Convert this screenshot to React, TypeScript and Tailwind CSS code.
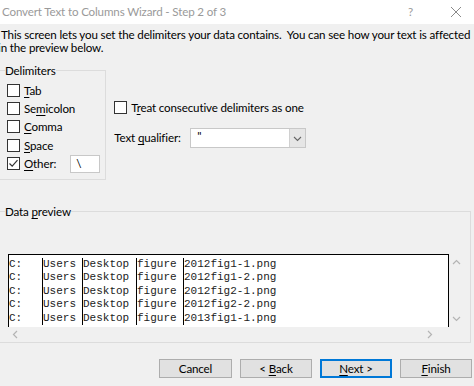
import React from 'react';

const rows = [
  ['C:', 'Users', 'Desktop', 'figure', '2012fig1-1.png'],
  ['C:', 'Users', 'Desktop', 'figure', '2012fig1-2.png'],
  ['C:', 'Users', 'Desktop', 'figure', '2012fig2-1.png'],
  ['C:', 'Users', 'Desktop', 'figure', '2012fig2-2.png'],
  ['C:', 'Users', 'Desktop', 'figure', '2013fig1-1.png'],
];

const colWidths = ['w-[33px]', 'w-[40px]', 'w-[54px]', 'w-[47px]', 'flex-1'];

const Check: React.FC<{ checked?: boolean }> = ({ checked }) => (
  <span className="w-[13px] h-[13px] border border-[#333333] bg-white flex items-center justify-center shrink-0">
    {checked && (
      <svg width="11" height="11" viewBox="0 0 11 11">
        <polyline points="1.5,5.5 4.2,8.2 9.5,2.2" fill="none" stroke="#333" strokeWidth="1.2" />
      </svg>
    )}
  </span>
);

const Chevron: React.FC<{ dir: 'up' | 'down' | 'left' | 'right' }> = ({ dir }) => {
  const pts = {
    up: '1,6 4.5,2.5 8,6',
    down: '1,3 4.5,6.5 8,3',
    left: '6,1 2.5,4.5 6,8',
    right: '3,1 6.5,4.5 3,8',
  }[dir];
  return (
    <svg width="9" height="9" viewBox="0 0 9 9">
      <polyline points={pts} fill="none" stroke="#b4b4b4" strokeWidth="1.2" />
    </svg>
  );
};

const Option: React.FC<{ pre?: string; u: string; post: string; checked?: boolean }> = ({ pre, u, post, checked }) => (
  <div className="flex items-center h-[18.4px] gap-[4px]">
    <Check checked={checked} />
    <span>
      {pre}
      <span className="underline underline-offset-2">{u}</span>
      {post}
    </span>
  </div>
);

export default function App() {
  return (
    <div
      className="w-[474px] h-[386px] overflow-hidden bg-[#f0f0f0] text-[11.6px] tracking-[-0.15px] text-black whitespace-nowrap"
      style={{ fontFamily: 'Lato, "Noto Sans", sans-serif' }}
    >
      <div className="h-[24px] bg-white flex items-center pl-[2px] text-[#9a9a9a] text-[11.6px]">
        <span className="flex-1">Convert Text to Columns Wizard - Step 2 of 3</span>
        <span className="w-[10px] mr-[32px]">?</span>
        <svg width="12" height="12" viewBox="0 0 12 12" className="mr-[12px]">
          <path d="M1 1 L11 11 M11 1 L1 11" stroke="#8a8a8a" strokeWidth="1" />
        </svg>
      </div>

      <div className="ml-[1px] mt-[5px] leading-[12.5px]">
        <div>This screen lets you set the delimiters your data contains.&nbsp; You can see how your text is affected</div>
        <div className="-ml-[3px]">in the preview below.</div>
      </div>

      <div className="flex mt-[10px]">
        <fieldset className="-ml-[1px] w-[105px] h-[116px] border border-[#dcdcdc] px-[5px] pt-0">
          <legend className="px-0 leading-[13px]">Delimiters</legend>
          <div className="pl-[2px] pt-[4px] flex flex-col">
            <Option u="T" post="ab" />
            <Option pre="Se" u="m" post="icolon" />
            <Option u="C" post="omma" />
            <Option u="S" post="pace" />
            <div className="flex items-center h-[18.4px] gap-[4px]">
              <Check checked />
              <span>
                <span className="underline underline-offset-2">O</span>ther:
              </span>
              <span className="ml-[10px] w-[30px] h-[18px] bg-white border border-[#c8c8c8] pl-[5px] leading-[16px]">\</span>
            </div>
          </div>
        </fieldset>

        <div className="ml-[8px] pt-[37px] flex flex-col">
          <div className="flex items-center gap-[4px] h-[13px]">
            <Check />
            <span>
              T<span className="underline underline-offset-2">r</span>eat consecutive delimiters as one
            </span>
          </div>
          <div className="flex items-center mt-[14px]">
            <span className="w-[76px]">
              Text <span className="underline underline-offset-2">q</span>ualifier:
            </span>
            <div className="w-[116px] h-[20px] bg-white border border-[#c8c8c8] flex">
              <span className="flex-1 pl-[6px] leading-[14px]">"</span>
              <span className="w-[16px] bg-[#e6e6e6] border-l border-[#d0d0d0] flex items-center justify-center">
                <svg width="9" height="9" viewBox="0 0 9 9">
                  <polyline points="1,3 4.5,6.5 8,3" fill="none" stroke="#666" strokeWidth="1.1" />
                </svg>
              </span>
            </div>
          </div>
        </div>
      </div>

      <fieldset className="-ml-[1px] mt-[25px] w-[472px] h-[138px] border border-[#dcdcdc] px-[5px]">
        <legend className="px-0 leading-[13px]">
          Data <span className="underline underline-offset-2">p</span>review
        </legend>
        <div className="-ml-[5px] pl-[8px] pt-[36px] flex">
          <div
            className="w-[441px] h-[73px] bg-white border-l border-t border-r border-black pt-[3px] text-[11px] leading-[13.4px] tracking-normal text-[#222]"
            style={{ fontFamily: '"Liberation Mono", "Courier New", monospace' }}
          >
            {rows.map((r, i) => (
              <div key={i} className="flex">
                {r.map((c, j) => (
                  <span key={j} className={`${colWidths[j]} ${j > 0 ? 'border-l border-black pl-0' : ''} h-[13.4px] whitespace-pre`}>
                    {c}
                  </span>
                ))}
              </div>
            ))}
          </div>
          <div className="w-[15px] h-[73px] flex flex-col items-center justify-between pt-[4px] pb-[4px]">
            <Chevron dir="up" />
            <Chevron dir="down" />
          </div>
        </div>
        <div className="-ml-[5px] pl-[11px] pr-[31px] h-[14px] flex items-center justify-between">
          <Chevron dir="left" />
          <Chevron dir="right" />
        </div>
      </fieldset>

      <div className="flex gap-[8px] pl-[159px] mt-[16px]">
        <button className="w-[73px] h-[19px] bg-[#e1e1e1] border border-[#adadad] leading-[15px]">Cancel</button>
        <button className="w-[72px] h-[19px] bg-[#e1e1e1] border border-[#adadad] leading-[15px]">
          &lt; <span className="underline underline-offset-2">B</span>ack
        </button>
        <button className="w-[72px] h-[19px] bg-[#e1e1e1] border-2 border-[#0078d7] leading-[13px]">
          <span className="underline underline-offset-2">N</span>ext &gt;
        </button>
        <button className="w-[72px] h-[19px] bg-[#e1e1e1] border border-[#adadad] leading-[15px]">
          <span className="underline underline-offset-2">F</span>inish
        </button>
      </div>
    </div>
  );
}
